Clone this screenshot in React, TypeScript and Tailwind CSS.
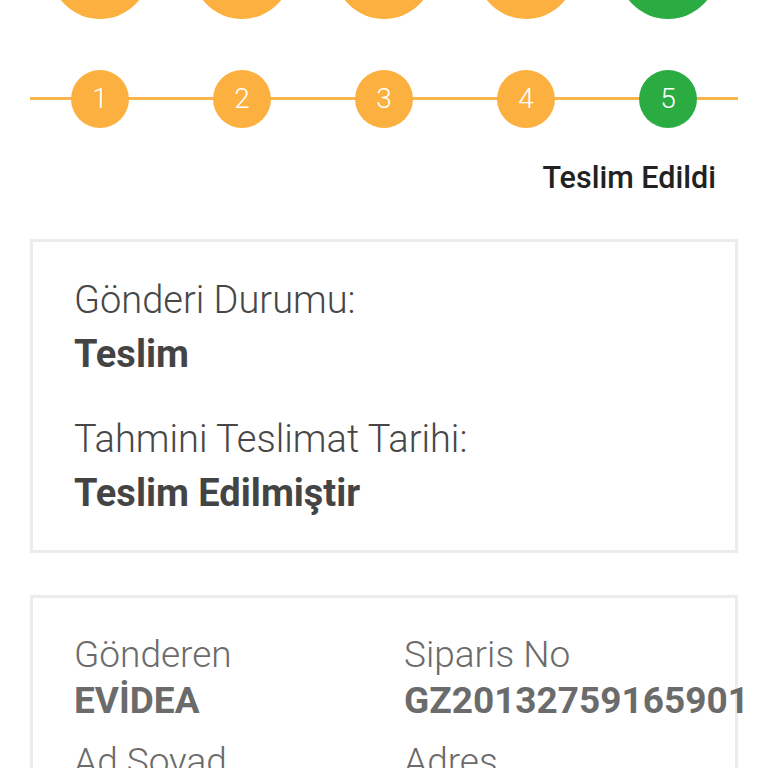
import React from "react";

const steps = [1, 2, 3, 4, 5];

export default function App() {
  return (
    <div
      className="w-[768px] h-[768px] overflow-hidden bg-white relative"
      style={{ fontFamily: "Roboto, 'Liberation Sans', sans-serif" }}
    >
      {/* cropped large circles row */}
      <div className="flex gap-[42px] pl-[50px] mt-[-81px]">
        {steps.map((s) => (
          <div
            key={s}
            className={
              s === 5
                ? "w-[100px] h-[100px] rounded-full bg-[#2bac43] shrink-0"
                : "w-[100px] h-[100px] rounded-full bg-[#fbb03f] shrink-0"
            }
          />
        ))}
      </div>

      {/* stepper */}
      <div className="relative mt-[51px] h-[58px]">
        <div className="absolute left-[30px] right-[30px] top-[27px] h-[3px] bg-[#f8b54c]" />
        <div className="relative flex gap-[84px] pl-[71px]">
          {steps.map((s) => (
            <div
              key={s}
              className={
                s === 5
                  ? "w-[58px] h-[58px] rounded-full bg-[#2bac43] shrink-0 flex items-center justify-center text-white text-[28px] font-light"
                  : "w-[58px] h-[58px] rounded-full bg-[#fbb03f] shrink-0 flex items-center justify-center text-white text-[28px] font-light"
              }
            >
              {s}
            </div>
          ))}
        </div>
      </div>

      <div className="flex justify-end pr-[52px] mt-[30px] text-[30.5px] leading-[40px] font-medium text-[#222]">
        Teslim Edildi
      </div>

      {/* card 1 */}
      <div className="mx-[30px] mt-[41px] border-[3px] border-[#ececec] pl-[41px] pt-[31px] pb-[30px] text-[38px]">
        <div className="leading-[54px] font-light text-[#474747]">Gönderi Durumu:</div>
        <div className="leading-[54px] font-bold text-[#444]">Teslim</div>
        <div className="mt-[31px] leading-[54px] font-light text-[#474747]">
          Tahmini Teslimat Tarihi:
        </div>
        <div className="leading-[54px] font-bold text-[#444]">Teslim Edilmiştir</div>
      </div>

      {/* card 2 */}
      <div className="mx-[30px] mt-[42px] border-[3px] border-[#ececec] pl-[41px] pt-[34px] h-[300px] text-[37px] text-[#6b6b6b]">
        <div className="grid grid-cols-[330px_1fr]">
          <div>
            <div className="leading-[46px] font-light">Gönderen</div>
            <div className="leading-[46px] font-bold">EVİDEA</div>
            <div className="mt-[15px] leading-[46px] font-light">Ad Soyad</div>
          </div>
          <div>
            <div className="leading-[46px] font-light">Siparis No</div>
            <div className="leading-[46px] font-bold whitespace-nowrap">GZ20132759165901</div>
            <div className="mt-[15px] leading-[46px] font-light">Adres</div>
          </div>
        </div>
      </div>
    </div>
  );
}
